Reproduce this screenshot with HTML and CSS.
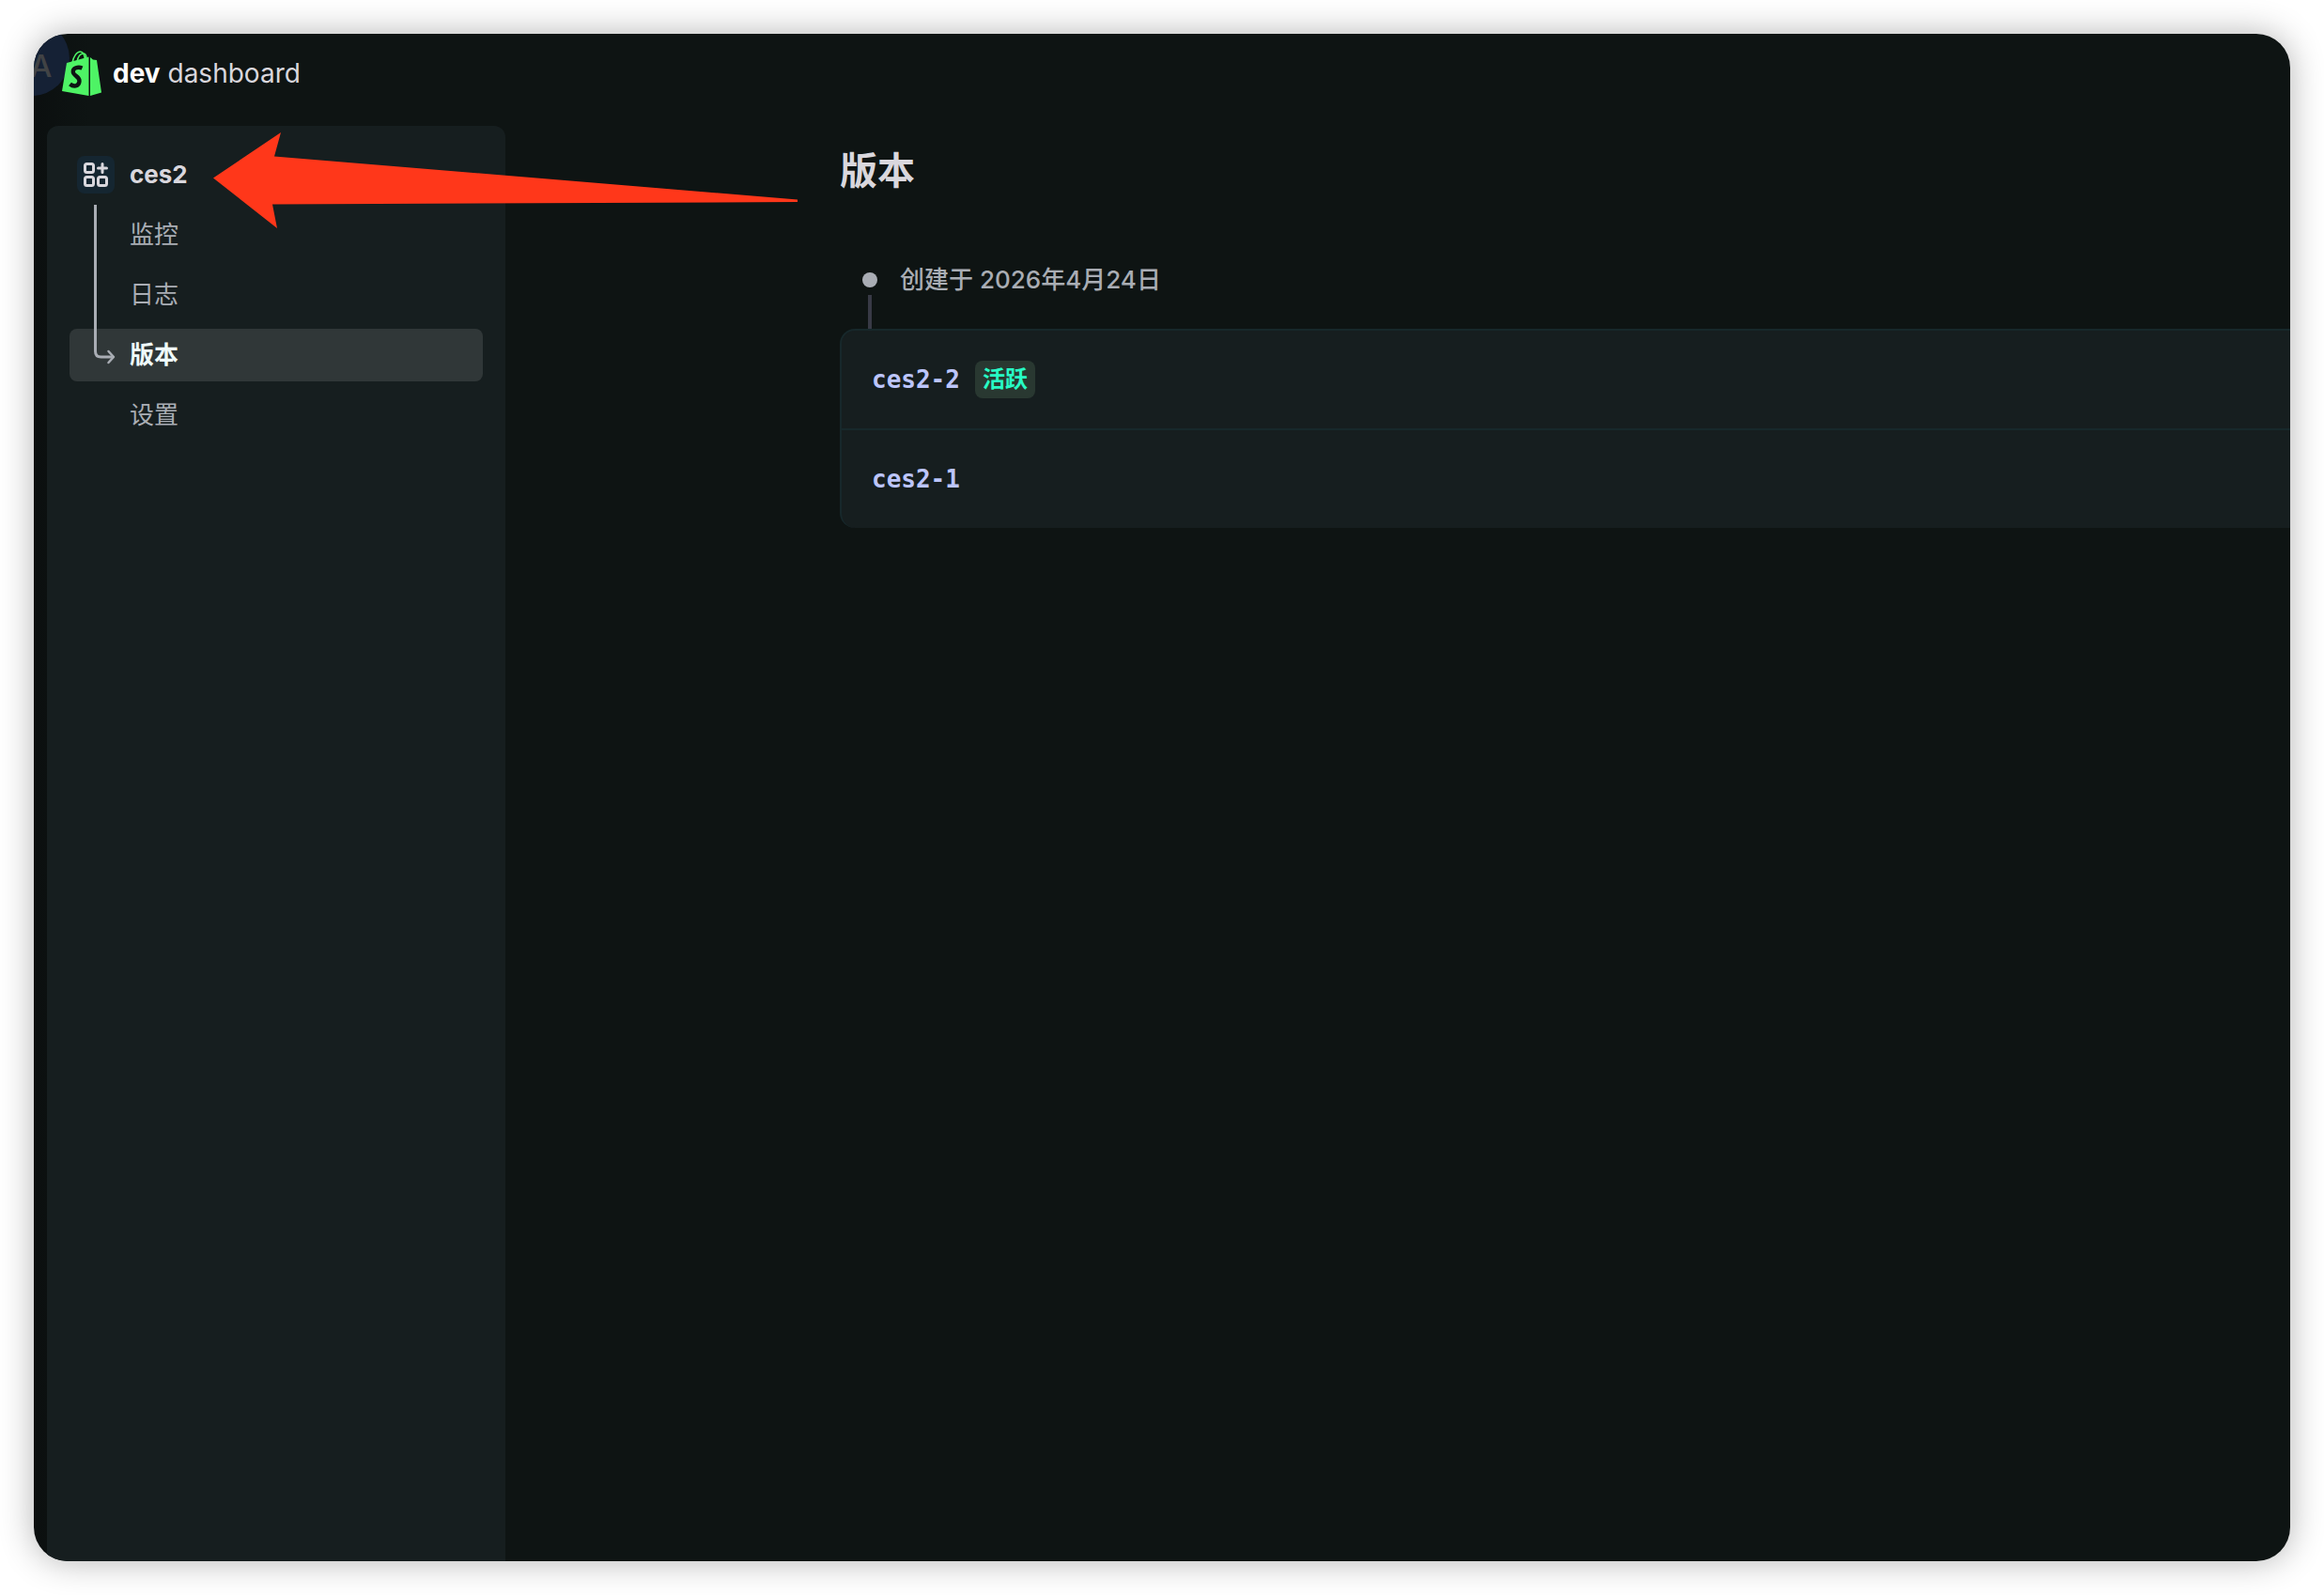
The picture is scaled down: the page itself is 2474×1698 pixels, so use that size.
FILE: index.html
```html
<!DOCTYPE html>
<html lang="zh-CN">
<head>
<meta charset="utf-8">
<meta name="viewport" content="width=device-width, initial-scale=1">
<title>dev dashboard</title>
<link rel="stylesheet" href="styles.css">
</head>
<body>
<div class="window">
  <header class="topbar">
    <span class="avatar" aria-hidden="true">A</span>
    <a class="brand" href="#">
      <svg class="brand-logo" viewBox="0 0 42 48" aria-hidden="true">
        <g fill="none" stroke="#4ef365" stroke-width="1.6">
          <path d="M11 13C12 6 16 1 19.500 1C22 1 24.500 4 24.500 10"/>
          <path d="M16 12C17 6 20 3 23 3C25 3 26 6 26 9"/>
        </g>
        <path fill="#4ef365" d="M5 13L28.500 6.500V48L0 43Z"/>
        <path fill="#4ef365" d="M30 7L33 9.500L37 10L42 44.500L30 48Z"/>
        <path fill="none" stroke="#0e1413" stroke-width="4.400" d="M21.500 18.500C17 16.500 11.500 18.500 11.800 22.500C12 27 19 27 18.500 32.500C18 38.500 12 38.500 8.500 35.500"/>
      </svg>
      <span class="brand-name"><strong>dev</strong> dashboard</span>
    </a>
  </header>
  <div class="body">
    <nav class="sidebar" aria-label="ces2">
      <a class="nav-item nav-app" href="#">
        <span class="app-icon">
          <svg viewBox="0 0 40 40" fill="none" stroke="#d9d7dd" stroke-width="3" aria-hidden="true">
            <rect x="8.500" y="8.500" width="9" height="9" rx="2"/>
            <rect x="8.500" y="22.500" width="9" height="9" rx="2"/>
            <rect x="22.500" y="22.500" width="9" height="9" rx="2"/>
            <path d="M27 8.500V17.500M22.500 13H31.500" stroke-linecap="round"/>
          </svg>
        </span>
        ces2
      </a>
      <a class="nav-item" href="#">监控</a>
      <a class="nav-item" href="#">日志</a>
      <a class="nav-item is-active" href="#" aria-current="page">版本</a>
      <a class="nav-item" href="#">设置</a>
      <svg class="tree-line" viewBox="0 0 24 172" fill="none" stroke="#a9adb4" aria-hidden="true">
        <path stroke-width="3" d="M2.500 0V156Q2.500 162 8.500 162H22"/>
        <path stroke-width="2.500" stroke-linecap="round" stroke-linejoin="round" d="M16.500 156L22 162L16.500 168"/>
      </svg>
    </nav>
    <main class="content">
      <h1 class="title">版本</h1>
      <p class="created"><span class="dot"></span>创建于 2026年4月24日</p>
      <ul class="versions">
        <li class="version"><a href="#">ces2-2</a><span class="badge">活跃</span></li>
        <li class="version"><a href="#">ces2-1</a></li>
      </ul>
    </main>
  </div>
  <svg class="pointer" viewBox="0 0 622 102" aria-hidden="true">
    <path fill="#ff371a" d="M0 48.500L72 0L65 25.500L622 71.500V74L63 76.500L68 102Z"/>
  </svg>
</div>
</body>
</html>
```
FILE: styles.css
```css
* {
  box-sizing: border-box;
}

body {
  margin: 0;
  padding: 36px;
  min-height: 100vh;
  display: flex;
  background: #fff;
  color: #d9d7dd;
  font: 26px/40px Inter, "Noto Sans CJK SC", sans-serif;
}

a {
  color: inherit;
  text-decoration: none;
}

.window {
  position: relative;
  flex: 1;
  min-width: 0;
  display: flex;
  flex-direction: column;
  overflow: hidden;
  border-radius: 36px;
  background: linear-gradient(90deg, #0b0f0f, #0e1413 60px);
}

body::before {
  content: "";
  position: absolute;
  inset: 36px;
  border-radius: 36px;
  box-shadow: 0 0 36px rgba(0, 0, 0, 0.3);
}

.topbar {
  display: flex;
  align-items: center;
  height: 98px;
  padding: 0 30px 14px;
}

.avatar {
  position: absolute;
  left: -42px;
  top: -14px;
  width: 80px;
  height: 80px;
  padding-left: 38px;
  border-radius: 50%;
  background: #152135;
  color: #414345;
  font-size: 33px;
  font-weight: 500;
  line-height: 96px;
}

.brand {
  position: relative;
  display: flex;
  align-items: center;
  gap: 12px;
}

.brand-logo {
  width: 42px;
  height: 48px;
}

.brand-name {
  font-size: 28px;
}

.brand-name strong {
  color: #fff;
}

.body {
  flex: 1;
  display: flex;
  padding-left: 14px;
}

.sidebar {
  position: relative;
  flex: 0 0 488px;
  display: flex;
  flex-direction: column;
  gap: 8px;
  padding: 24px;
  border-radius: 12px 12px 0 0;
  background: #161e1f;
}

.nav-item {
  display: flex;
  align-items: center;
  height: 56px;
  padding-left: 64px;
  border-radius: 8px;
  color: #a9adb4;
}

.nav-app {
  gap: 16px;
  padding-left: 8px;
  color: #d9d7dd;
  font-weight: 700;
}

.nav-item.is-active {
  background: #303738;
  color: #effafa;
  font-weight: 700;
}

.app-icon {
  width: 40px;
  height: 40px;
  border-radius: 8px;
  background: #152631;
}

.app-icon svg {
  display: block;
}

.tree-line {
  position: absolute;
  left: 49px;
  top: 84px;
  width: 24px;
  height: 172px;
}

.content {
  flex: 1;
  min-width: 0;
  padding: 24px 0 24px 356px;
}

.title {
  margin: 0 0 72px;
  font-size: 40px;
  line-height: 48px;
}

.created {
  position: relative;
  display: flex;
  align-items: center;
  gap: 24px;
  margin: 0;
  padding: 0 0 32px 24px;
  color: #a9adb4;
  font-weight: 500;
}

.created::after {
  content: "";
  position: absolute;
  left: 30px;
  bottom: 0;
  width: 4px;
  height: 36px;
  background: #383a46;
}

.dot {
  width: 16px;
  height: 16px;
  border-radius: 50%;
  background: #a9adb4;
}

.versions {
  margin: 0;
  padding: 0;
  list-style: none;
  border: 2px solid #17282b;
  border-width: 2px 0 0 2px;
  border-radius: 16px 0 0 16px;
  background: #161e1f;
}

.version {
  display: flex;
  align-items: center;
  gap: 16px;
  height: 104px;
  padding: 0 32px;
}

.version + .version {
  height: 106px;
  border-top: 2px solid #17282b;
}

.version a {
  color: #bcc5fb;
  font-family: "DejaVu Sans Mono", monospace;
  font-weight: 700;
}

.badge {
  padding: 0 8px;
  border-radius: 8px;
  background: #293831;
  color: #27fcc5;
  font-size: 24px;
  font-weight: 700;
}

.pointer {
  position: absolute;
  left: 191px;
  top: 105px;
  width: 622px;
  height: 102px;
}
```
